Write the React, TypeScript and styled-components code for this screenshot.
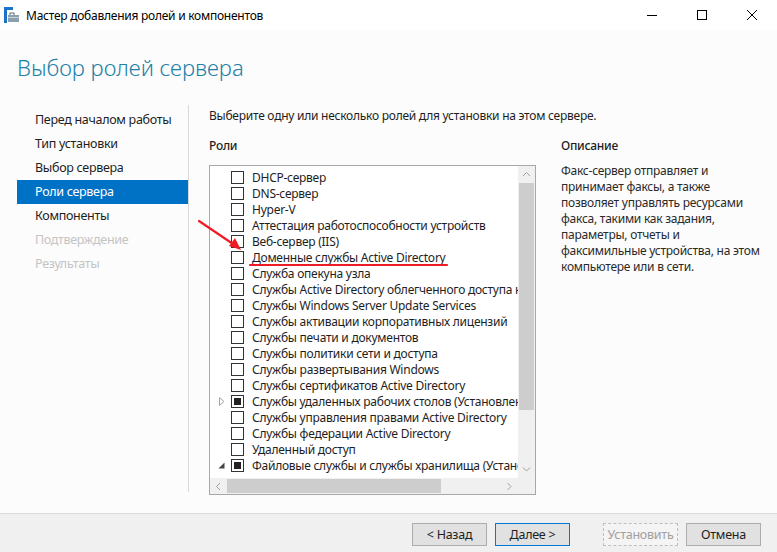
import React from "react";
import styled, { createGlobalStyle } from "styled-components";

const GlobalStyle = createGlobalStyle`
  html, body {
    margin: 0;
    padding: 0;
    background: #fcfcfc;
  }
  body {
    font-family: "Noto Sans", "Open Sans", sans-serif;
    font-size: 12px;
    letter-spacing: -0.25px;
    color: #1e1e1e;
  }
  * { box-sizing: border-box; }
`;

const Window = styled.div`
  position: relative;
  width: 777px;
  height: 552px;
  display: flex;
  flex-direction: column;
  background: #fcfcfc;
  overflow: hidden;
`;

const TitleBar = styled.div`
  height: 30px;
  flex: 0 0 30px;
  display: flex;
  align-items: center;
  background: #ffffff;
  padding-left: 4px;
`;

const TitleText = styled.div`
  margin-left: 7px;
  font-size: 12px;
  color: #000;
  flex: 1;
`;

const WinButton = styled.div`
  width: 50px;
  height: 30px;
  display: flex;
  align-items: center;
  justify-content: center;
`;

const Heading = styled.h1`
  margin: 22px 0 0 17px;
  font-size: 22px;
  font-weight: 300;
  letter-spacing: 0;
  line-height: 30px;
  color: #2180a8;
  height: 30px;
`;

const Main = styled.div`
  display: flex;
  margin-top: 23px;
  height: 387px;
`;

const Nav = styled.div`
  width: 172px;
  margin-left: 17px;
  padding-top: 3px;
  border-right: 1px solid #d9d9d9;
`;

const NavItem = styled.div<{ $active?: boolean; $disabled?: boolean }>`
  height: 24px;
  line-height: 24px;
  padding-left: 18px;
  font-size: 12.5px;
  letter-spacing: -0.3px;
  background: ${(p) => (p.$active ? "#0072c6" : "transparent")};
  color: ${(p) => (p.$active ? "#fff" : p.$disabled ? "#c4c4c4" : "#1e1e1e")};
`;

const Content = styled.div`
  flex: 1;
  padding-left: 20px;
  display: flex;
  flex-direction: column;
`;

const Intro = styled.div`
  height: 18px;
  line-height: 18px;
  margin-top: 2px;
`;

const Columns = styled.div`
  display: flex;
  margin-top: 12px;
  gap: 25px;
`;

const RolesColumn = styled.div`
  width: 327px;
  display: flex;
  flex-direction: column;
`;

const SectionLabel = styled.div`
  height: 18px;
  line-height: 18px;
  font-weight: 500;
  margin-bottom: 10px;
`;

const ListBox = styled.div`
  height: 330px;
  border: 1px solid #a8a8a8;
  background: #fff;
  display: grid;
  grid-template-columns: 1fr 17px;
  grid-template-rows: 1fr 16px;
`;

const ListView = styled.div`
  overflow: hidden;
  padding-top: 3px;
`;

const Row = styled.div`
  height: 16px;
  display: flex;
  align-items: center;
  white-space: nowrap;
`;

const Expander = styled.div`
  flex: 0 0 21px;
  display: flex;
  align-items: center;
  justify-content: center;
  padding-left: 2px;
`;

const Check = styled.div<{ $partial?: boolean }>`
  width: 13px;
  height: 13px;
  border: 1px solid #333;
  background: #fff;
  display: flex;
  align-items: center;
  justify-content: center;
  flex: 0 0 13px;
  &::after {
    content: "";
    display: ${(p) => (p.$partial ? "block" : "none")};
    width: 7px;
    height: 7px;
    background: #222;
  }
`;

const RowLabel = styled.span`
  margin-left: 8px;
  flex-shrink: 0;
`;

const VScroll = styled.div`
  background: #f0f0f0;
  display: flex;
  flex-direction: column;
  align-items: stretch;
`;

const HScroll = styled.div`
  background: #f0f0f0;
  display: flex;
  align-items: stretch;
`;

const Corner = styled.div`
  background: #f0f0f0;
`;

const ArrowBtn = styled.div`
  flex: 0 0 17px;
  display: flex;
  align-items: center;
  justify-content: center;
`;

const VThumb = styled.div`
  height: 227px;
  background: #cdcdcd;
  margin: 0 1px;
`;

const HThumb = styled.div`
  width: 214px;
  background: #cdcdcd;
  margin: 1px 0;
`;

const Spacer = styled.div`
  flex: 1;
`;

const DescColumn = styled.div`
  flex: 1;
  display: flex;
  flex-direction: column;
`;

const DescText = styled.div`
  line-height: 16px;
  margin-top: -2px;
  color: #2a2a2a;
`;

const Footer = styled.div`
  margin-top: auto;
  height: 39px;
  border-top: 1px solid #dadada;
  background: #f0f0f0;
  display: flex;
  align-items: flex-start;
  justify-content: flex-end;
  padding: 9px 16px 0 0;
  gap: 8px;
`;

const Button = styled.div<{ $primary?: boolean; $disabled?: boolean; $gap?: number }>`
  width: 75px;
  height: 23px;
  display: flex;
  align-items: center;
  justify-content: center;
  margin-left: ${(p) => p.$gap ?? 0}px;
  background: ${(p) => (p.$disabled ? "#f4f4f4" : "#e1e1e1")};
  border: 1px ${(p) => (p.$disabled ? "dashed" : "solid")}
    ${(p) => (p.$primary ? "#0078d7" : p.$disabled ? "#bfbfbf" : "#adadad")};
  color: ${(p) => (p.$disabled ? "#a0a0a0" : "#1e1e1e")};
  font-size: 12.5px;
`;

const Annotation = styled.svg`
  position: absolute;
  left: 0;
  top: 0;
  pointer-events: none;
`;

const roles: { label: string; expander?: "closed" | "open"; partial?: boolean }[] = [
  { label: "DHCP-сервер" },
  { label: "DNS-сервер" },
  { label: "Hyper-V" },
  { label: "Аттестация работоспособности устройств" },
  { label: "Веб-сервер (IIS)" },
  { label: "Доменные службы Active Directory" },
  { label: "Служба опекуна узла" },
  { label: "Службы Active Directory облегченного доступа к каталогам" },
  { label: "Службы Windows Server Update Services" },
  { label: "Службы активации корпоративных лицензий" },
  { label: "Службы печати и документов" },
  { label: "Службы политики сети и доступа" },
  { label: "Службы развертывания Windows" },
  { label: "Службы сертификатов Active Directory" },
  { label: "Службы удаленных рабочих столов (Установлено 2 из 6)", expander: "closed", partial: true },
  { label: "Службы управления правами Active Directory" },
  { label: "Службы федерации Active Directory" },
  { label: "Удаленный доступ" },
  { label: "Файловые службы и службы хранилища (Установлено 2 из 12)", expander: "open", partial: true },
];

const navItems = [
  { label: "Перед началом работы" },
  { label: "Тип установки" },
  { label: "Выбор сервера" },
  { label: "Роли сервера", active: true },
  { label: "Компоненты" },
  { label: "Подтверждение", disabled: true },
  { label: "Результаты", disabled: true },
];

const AppIcon = () => (
  <svg width="15" height="16" viewBox="0 0 15 16">
    <rect x="0" y="0" width="9" height="3" fill="#1a73c9" />
    <rect x="0" y="0" width="3" height="16" fill="#1a73c9" />
    <rect x="6" y="6" width="4" height="3" fill="none" stroke="#5f6f7a" strokeWidth="1" />
    <rect x="4" y="8" width="11" height="7" fill="#8aa0ad" />
    <rect x="4" y="10" width="11" height="1" fill="#c7d4dc" />
  </svg>
);

const Caret = ({ dir }: { dir: "up" | "down" | "left" | "right" }) => {
  const d = {
    up: "M1 5 L4.5 1.5 L8 5",
    down: "M1 1.5 L4.5 5 L8 1.5",
    left: "M5 1 L1.5 4.5 L5 8",
    right: "M1.5 1 L5 4.5 L1.5 8",
  }[dir];
  const w = dir === "up" || dir === "down" ? 9 : 7;
  const h = dir === "up" || dir === "down" ? 7 : 9;
  return (
    <svg width={w} height={h} viewBox={`0 0 ${w} ${h}`}>
      <path d={d} fill="none" stroke="#a0a0a0" strokeWidth="1" />
    </svg>
  );
};

const TreeToggle = ({ kind }: { kind?: "closed" | "open" }) => {
  if (kind === "closed")
    return (
      <svg width="6" height="9" viewBox="0 0 6 9">
        <path d="M0.5 0.5 L5 4.5 L0.5 8.5 Z" fill="none" stroke="#a6a6a6" strokeWidth="1" />
      </svg>
    );
  if (kind === "open")
    return (
      <svg width="7" height="7" viewBox="0 0 7 7">
        <path d="M6.5 0.5 L6.5 6.5 L0.5 6.5 Z" fill="#444" />
      </svg>
    );
  return null;
};

export default function App() {
  return (
    <>
      <GlobalStyle />
      <Window>
        <TitleBar>
          <AppIcon />
          <TitleText>Мастер добавления ролей и компонентов</TitleText>
          <WinButton>
            <svg width="10" height="10" viewBox="0 0 10 10">
              <rect x="0" y="5" width="10" height="1" fill="#000" />
            </svg>
          </WinButton>
          <WinButton>
            <svg width="10" height="10" viewBox="0 0 10 10">
              <rect x="0.5" y="0.5" width="9" height="9" fill="none" stroke="#000" />
            </svg>
          </WinButton>
          <WinButton>
            <svg width="10" height="10" viewBox="0 0 10 10">
              <path d="M0 0 L10 10 M10 0 L0 10" stroke="#000" strokeWidth="1" />
            </svg>
          </WinButton>
        </TitleBar>

        <Heading>Выбор ролей сервера</Heading>

        <Main>
          <Nav>
            {navItems.map((n) => (
              <NavItem key={n.label} $active={n.active} $disabled={n.disabled}>
                {n.label}
              </NavItem>
            ))}
          </Nav>

          <Content>
            <Intro>Выберите одну или несколько ролей для установки на этом сервере.</Intro>
            <Columns>
              <RolesColumn>
                <SectionLabel>Роли</SectionLabel>
                <ListBox>
                  <ListView>
                    {roles.map((r) => (
                      <Row key={r.label}>
                        <Expander>
                          <TreeToggle kind={r.expander} />
                        </Expander>
                        <Check $partial={r.partial} />
                        <RowLabel>{r.label}</RowLabel>
                      </Row>
                    ))}
                  </ListView>
                  <VScroll>
                    <ArrowBtn>
                      <Caret dir="up" />
                    </ArrowBtn>
                    <VThumb />
                    <Spacer />
                    <ArrowBtn>
                      <Caret dir="down" />
                    </ArrowBtn>
                  </VScroll>
                  <HScroll>
                    <ArrowBtn>
                      <Caret dir="left" />
                    </ArrowBtn>
                    <HThumb />
                    <Spacer />
                    <ArrowBtn>
                      <Caret dir="right" />
                    </ArrowBtn>
                  </HScroll>
                  <Corner />
                </ListBox>
              </RolesColumn>

              <DescColumn>
                <SectionLabel>Описание</SectionLabel>
                <DescText>
                  Факс-сервер отправляет и
                  <br />
                  принимает факсы, а также
                  <br />
                  позволяет управлять ресурсами
                  <br />
                  факса, такими как задания,
                  <br />
                  параметры, отчеты и
                  <br />
                  факсимильные устройства, на этом
                  <br />
                  компьютере или в сети.
                </DescText>
              </DescColumn>
            </Columns>
          </Content>
        </Main>

        <Footer>
          <Button>&lt; Назад</Button>
          <Button $primary>Далее &gt;</Button>
          <Button $disabled $gap={25}>
            Установить
          </Button>
          <Button>Отмена</Button>
        </Footer>

        <Annotation width="777" height="552" viewBox="0 0 777 552">
          <path d="M199 221 L236 246" stroke="#ee1c25" strokeWidth="2.2" strokeLinecap="round" />
          <path d="M241 250 L229 246 L235 238 Z" fill="#ee1c25" />
          <path d="M250 265 L447 265" stroke="#ee1c25" strokeWidth="2.2" strokeLinecap="round" />
        </Annotation>
      </Window>
    </>
  );
}
